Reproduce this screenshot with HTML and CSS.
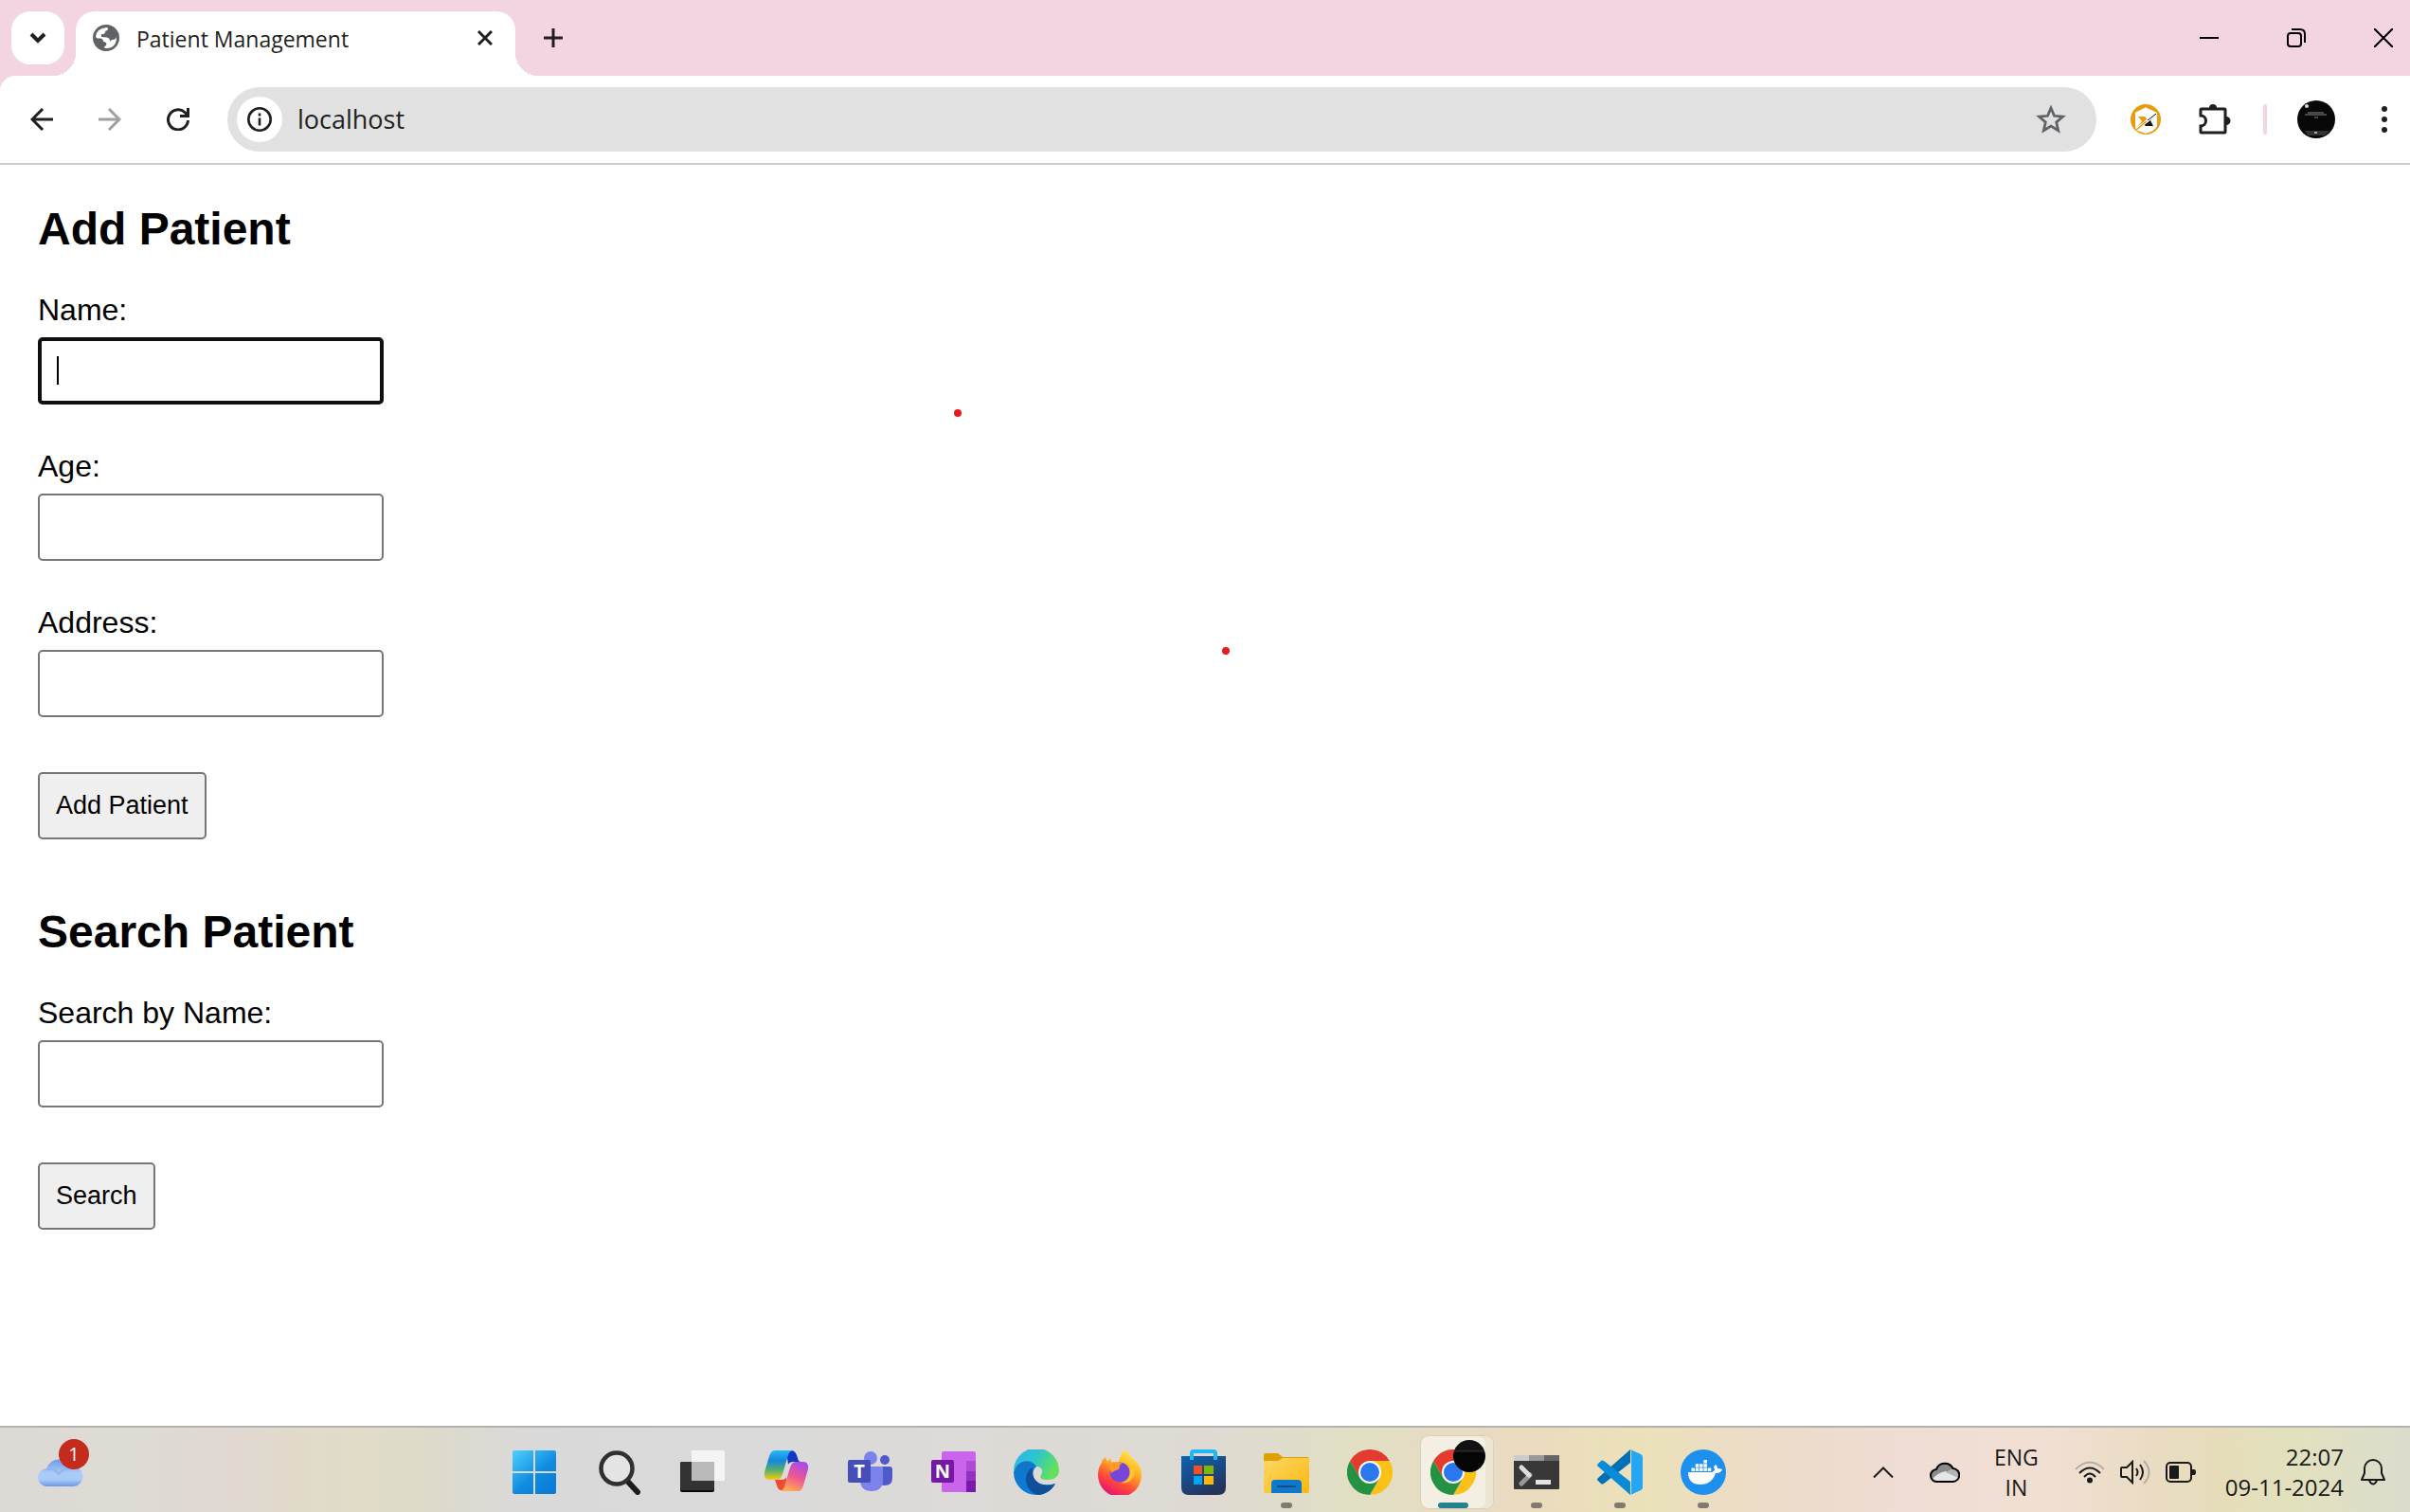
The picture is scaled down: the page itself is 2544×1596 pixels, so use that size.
FILE: index.html
```html
<!DOCTYPE html>
<html lang="en">
<head>
<meta charset="utf-8">
<title>Patient Management</title>
<link rel="stylesheet" href="styles.css">
</head>
<body>
<svg width="0" height="0" class="defs" aria-hidden="true">
  <defs>
    <symbol id="chrome" viewBox="0 0 48 48">
      <path d="M24 24L3.2 12A24 24 0 0 1 44.8 12Z" fill="#e33b2e"/>
      <path d="M44.800 12A24 24 0 0 1 24 48L34.400 30L24 12Z" fill="#fbc116"/>
      <path d="M24 48A24 24 0 0 1 3.200 12L13.600 30L34.400 30Z" fill="#259143"/>
      <path d="M3.200 12L13.600 30L24 24L24 12Z" fill="#e33b2e"/>
      <circle cx="24" cy="24" r="12" fill="#fff"/>
      <circle cx="24" cy="24" r="10" fill="#2b78ee"/>
    </symbol>
  </defs>
</svg>
<header class="browser">
  <div class="tabstrip">
    <button class="tab-search" aria-label="Search tabs"><svg width="18" height="14" viewBox="0 0 18 14"><path d="M2 3l7 7 7-7" fill="none" stroke="#1f1f1f" stroke-width="4"/></svg></button>
    <div class="tab">
      <svg width="28" height="28" viewBox="0 0 28 28"><circle cx="14" cy="14" r="14" fill="#5f6368"/><path d="M14.500 3Q16 3 16 4.500T14 6.500Q13 6.500 13 8T11 10H9v3q3 0 6 .5 3 1 3 3t2-.5h1q3 0 4-3Q25 25 14 25q-2 0-2-1 0-2 2-2.500 1-.5 0-2.500-2 0-3-1T9 15.500Q5 16 3 13 3.500 4 14.500 3z" fill="#fff"/><path d="M3 14.500h5q3 0 3 3.500 3 0 3 2.500T11.500 23v1.500Q4 23 3 14.500z" fill="#5f6368"/></svg>
      <span class="tab-title">Patient Management</span>
      <button class="plain" aria-label="Close tab"><svg width="16" height="16" viewBox="0 0 16 16"><path d="M1 1l14 14M15 1L1 15" stroke="#1f1f1f" stroke-width="3"/></svg></button>
    </div>
    <button class="plain new-tab" aria-label="New tab"><svg width="20" height="20" viewBox="0 0 20 20"><path d="M10 0v20M0 10h20" stroke="#1f1f1f" stroke-width="3"/></svg></button>
    <div class="window-controls">
      <button class="plain" aria-label="Minimize"><svg width="20" height="20" viewBox="0 0 20 20"><path d="M0 10h20" stroke="#000" stroke-width="2"/></svg></button>
      <button class="plain" aria-label="Restore"><svg width="20" height="20" viewBox="0 0 20 20" fill="none" stroke="#000" stroke-width="2"><rect x="1" y="5" width="14" height="14" rx="3"/><path d="M5 1h9q5 0 5 5v9"/></svg></button>
      <button class="plain" aria-label="Close"><svg width="20" height="20" viewBox="0 0 20 20"><path d="M0 0l20 20M20 0L0 20" stroke="#000" stroke-width="2"/></svg></button>
    </div>
  </div>
  <div class="toolbar">
    <div class="nav">
      <button class="plain" aria-label="Back"><svg width="24" height="24" viewBox="0 0 24 24" fill="none" stroke="#1f1f1f" stroke-width="3"><path d="M24 12H2M13 1L2 12l11 11"/></svg></button>
      <button class="plain" aria-label="Forward"><svg width="24" height="24" viewBox="0 0 24 24" fill="none" stroke="#a0a0a0" stroke-width="3"><path d="M0 12h22M11 1l11 11-11 11"/></svg></button>
      <button class="plain" aria-label="Reload"><svg width="24" height="24" viewBox="0 0 24 24" fill="none" stroke="#1f1f1f" stroke-width="3"><path d="M22.500 13A10.500 10.500 0 1 1 19 4.500l3 3M22.500 0v8.500H14"/></svg></button>
    </div>
    <div class="omnibox">
      <button class="site-info" aria-label="Site information"><svg width="26" height="26" viewBox="0 0 26 26"><circle cx="13" cy="13" r="11.700" fill="none" stroke="#1f1f1f" stroke-width="2.600"/><path d="M13 11.500v8M13 6.500v3" stroke="#1f1f1f" stroke-width="2.600"/></svg></button>
      <input class="address" type="text" value="localhost" aria-label="Address">
      <button class="plain" aria-label="Bookmark"><svg width="32" height="30" viewBox="0 0 32 30"><path d="M16 3l3.500 8.300 9 .8-6.800 5.900 2 8.800L16 22.100l-7.700 4.700 2-8.800L3.500 12.100l9-.8z" fill="none" stroke="#5f6368" stroke-width="2.800"/></svg></button>
    </div>
    <div class="extensions">
      <svg width="32" height="32" viewBox="0 0 32 32"><circle cx="16" cy="16" r="15" fill="#fff" stroke="#e89c0c" stroke-width="2"/><path d="M6 28A15.500 15.500 0 1 1 26 28Q28 26 28 24V9L16 3.500 5 9z" fill="#e89c0c"/><path d="M5 9l11-5.500L27 9v15l-4 4-7 3-8-3-3-4z" fill="#fff"/><path d="M8 13h7l3 3-7 7H8l4-5z" fill="#e89c0c"/><path d="M24 23h-8l-3-2 7-6 7-4-6 6z" fill="#111"/><path d="M6 27L27 10" stroke="#fff" stroke-width="3"/><path d="M6 27L17 18" stroke="#e89c0c" stroke-width="1.500"/><path d="M18 17L27 10" stroke="#111"/></svg>
      <svg class="puzzle" width="34" height="34" viewBox="0 0 34 34"><path d="M3 6h24q1 0 1 1v23q0 1-1 1H3q-1 0-1-1v-6a5.500 5.500 0 0 0 0-11V7q0-1 1-1z" fill="none" stroke="#1f1f1f" stroke-width="3"/><path d="M11 5a4 4 0 0 1 8 0zM29 14a4 4 0 0 1 0 9z" fill="#1f1f1f"/></svg>
      <span class="separator"></span>
      <svg width="40" height="40" viewBox="0 0 40 40"><circle cx="20" cy="20" r="20" fill="#080808"/><circle cx="10" cy="6" r="2" fill="#ddd"/><path d="M11 13h17M8 15h23M18 18h4" stroke="#888"/><path d="M8 32h26l-5 5H11z" fill="#333"/><path d="M18 34h3" stroke="#aaa" stroke-width="2"/></svg>
      <button class="plain" aria-label="Menu"><svg width="6" height="28" viewBox="0 0 6 28" fill="#1f1f1f"><circle cx="3" cy="3" r="3"/><circle cx="3" cy="14" r="3"/><circle cx="3" cy="25" r="3"/></svg></button>
    </div>
  </div>
</header>

<main class="page">
  <h2>Add Patient</h2>
  <form>
    <label for="name">Name:</label>
    <span class="focus-field"><input class="field" type="text" id="name"><span class="caret"></span></span>
    <label for="age">Age:</label>
    <input class="field" type="text" id="age">
    <label for="address">Address:</label>
    <input class="field" type="text" id="address">
    <button class="submit" type="button">Add Patient</button>
  </form>
  <h2>Search Patient</h2>
  <form>
    <label for="search">Search by Name:</label>
    <input class="field" type="text" id="search">
    <button class="submit" type="button">Search</button>
  </form>
  <span class="dot dot-a"></span>
  <span class="dot dot-b"></span>
</main>

<footer class="taskbar">
  <button class="plain weather" aria-label="Weather">
    <svg width="48" height="31" viewBox="0 0 48 31"><defs><linearGradient id="cl" x2="0" y2="1"><stop offset="0" stop-color="#7098e6"/><stop offset=".5" stop-color="#a9cbf8"/><stop offset=".75" stop-color="#a9cbf8"/><stop offset="1" stop-color="#6d94e6"/></linearGradient></defs><path d="M10 31a9.500 9.500 0 0 1-1-19A15 15 0 0 1 36 10a10.500 10.500 0 0 1 2 21z" fill="url(#cl)"/><path d="M9 13q9-1 13 5 5-7 14-6" fill="none" stroke="#8fb4f1" stroke-width="2"/></svg>
    <span class="badge">1</span>
  </button>
  <nav class="apps">
    <button class="app" aria-label="Start"><svg width="48" height="48" viewBox="0 0 48 48"><defs><linearGradient id="w" gradientUnits="userSpaceOnUse" x1="0" y1="0" x2="40" y2="48"><stop offset="0" stop-color="#4fd4ff"/><stop offset=".6" stop-color="#0f8be0"/><stop offset="1" stop-color="#0a7bd6"/></linearGradient></defs><path d="M3 1h20v22H1V3q0-2 2-2zM25 1h20q2 0 2 2v20H25zM1 25h22v22H3q-2 0-2-2zM25 25h22v20q0 2-2 2H25z" fill="url(#w)"/></svg></button>
    <button class="app" aria-label="Search"><svg width="48" height="48" viewBox="0 0 48 48"><path d="M32 33l11 12" stroke="#1c1c1c" stroke-width="6" stroke-linecap="round"/><circle cx="21" cy="20" r="16.500" fill="#e4e4e4" stroke="#303030" stroke-width="4.500"/></svg></button>
    <button class="app" aria-label="Task view"><svg width="48" height="48" viewBox="0 0 48 48"><rect y="13" width="36" height="32" rx="2" fill="#0a0a0a"/><rect y="13" width="36" height="30" rx="2" fill="#333"/><rect x="12" y="1" width="35" height="32" rx="1" fill="#f4f4f4"/><path d="M12 13h24v20H12z" fill="#b9b9b9"/></svg></button>
    <button class="app" aria-label="Copilot"><svg width="48" height="48" viewBox="0 0 48 48"><defs><linearGradient id="ca" x2="0" y2="1"><stop offset="0" stop-color="#27b8f5"/><stop offset=".35" stop-color="#1687dc"/><stop offset=".65" stop-color="#4fae70"/><stop offset="1" stop-color="#f8cb10"/></linearGradient><linearGradient id="cb" x1=".7" x2=".3" y2="1"><stop offset="0" stop-color="#a64be8"/><stop offset=".5" stop-color="#ef5790"/><stop offset="1" stop-color="#ffb050"/></linearGradient></defs><path d="M24 1h5q4 0 6 5l2 6 2 1h-8q-4 0-5 3z" fill="#1137c4"/><path d="M24 43h-5q-4 0-5-5l-2-6h7q4 0 5-3z" fill="#ee4c34"/><path d="M12 1h19q-4 1-5 5l-6 20q-2 6-6 6H6q-6 0-5-8L6 7q2-6 6-6z" fill="url(#ca)"/><path d="M37 44H17q4-1 5-5l6-20q2-6 6-6h8q6 0 5 8l-5 17q-2 6-5 6z" fill="url(#cb)"/></svg></button>
    <button class="app" aria-label="Teams"><svg width="48" height="48" viewBox="0 0 48 48"><circle cx="40" cy="11" r="5" fill="#5059c9"/><circle cx="25" cy="9" r="7" fill="#7b83eb"/><path d="M35 18h10q3 0 3 3v9q0 8-8 8-5 0-7-4z" fill="#5059c9"/><path d="M14 18h24v14q0 12-12 12T14 32z" fill="#7b83eb"/><rect x="1" y="11" width="24" height="24" rx="2" fill="#464eb8"/></svg><span class="glyph">T</span></button>
    <button class="app" aria-label="OneNote"><svg width="48" height="48" viewBox="0 0 48 48"><rect x="12" y="2" width="36" height="43" rx="2" fill="#ca64ea"/><path d="M38 12h10v11H38z" fill="#ae4bd5"/><path d="M38 23h10v10H38z" fill="#9332bf"/><path d="M38 33h10v12H38z" fill="#7719aa"/><rect x="1" y="11" width="24" height="24" rx="2" fill="#7418a5"/></svg><span class="glyph">N</span></button>
    <button class="app" aria-label="Edge"><svg width="48" height="48" viewBox="0 0 48 48"><defs><linearGradient id="ea" x2="1" y2=".4"><stop offset="0" stop-color="#32b1f1"/><stop offset=".5" stop-color="#2cc4cf"/><stop offset="1" stop-color="#62e05e"/></linearGradient><linearGradient id="eb" x2=".6" y2="1"><stop offset="0" stop-color="#1173c4"/><stop offset="1" stop-color="#0a7fdd"/></linearGradient></defs><path d="M0 24C4 8 22 8 26 17c-8 3-8 18 4 20 6 1 10 0 14-1A24 24 0 0 1 24 48 24 24 0 0 1 0 24z" fill="url(#eb)"/><path d="M0 23A24 24 0 0 1 48 22c0 7-6 10-12 10-7 0-9-2-7-5 3-5 0-9-5-9C20 10 5 9 0 23z" fill="url(#ea)"/><path d="M20 19c-12 6-8 27 7 29 8-1 14-6 17-12-10 4-26 1-24-17z" fill="#10509a"/></svg></button>
    <button class="app" aria-label="Firefox"><svg width="48" height="48" viewBox="0 0 48 48"><defs><linearGradient id="fa" x1=".8" x2=".3" y2="1"><stop offset="0" stop-color="#fff04a"/><stop offset=".4" stop-color="#ffae20"/><stop offset=".7" stop-color="#ff4b38"/><stop offset="1" stop-color="#e40c78"/></linearGradient></defs><path d="M5 14q0-3 4-6l2 5 3-4 1 4 8 1q1-9 7-14 3 6 9 11 8 6 8 16A23 23 0 0 1 1 27Q1 19 5 14z" fill="url(#fa)"/><circle cx="24" cy="24" r="10.500" fill="#7545dc"/><path d="M17 14q5-2 10 1-4 1-3 3l-1 3q-5 1-8 4l-2-7z" fill="#ff9825"/><path d="M38 17q4 9-2 15-4 4-10 3 10-3 9-13z" fill="#ffc03a"/></svg></button>
    <button class="app" aria-label="Store"><svg width="48" height="48" viewBox="0 0 48 48"><defs><linearGradient id="st" x2=".5" y2="1"><stop offset="0" stop-color="#0d63b4"/><stop offset="1" stop-color="#24355d"/></linearGradient></defs><path d="M1 7h47v33q0 8-8 8H9q-8 0-8-8z" fill="url(#st)"/><path d="M12 11V4q0-2 2-2h21q2 0 2 2v7" fill="none" stroke="#21b7f5" stroke-width="4"/><path d="M14 17h9v9h-9z" fill="#f25022"/><path d="M25 17h10v9H25z" fill="#7fba00"/><path d="M14 28h9v9h-9z" fill="#00a4ef"/><path d="M25 28h10v9H25z" fill="#ffb900"/></svg></button>
    <button class="app running" aria-label="File Explorer"><svg width="48" height="48" viewBox="0 0 48 48"><defs><linearGradient id="fe" x2="1" y2="1"><stop offset="0" stop-color="#ffd766"/><stop offset="1" stop-color="#f8b90e"/></linearGradient></defs><path d="M0 6q0-2 2-2h13l5 4h26q2 0 2 2v4H0z" fill="#dfa000"/><path d="M0 12h15l5-3h28v35q0 2-2 2H2q-2 0-2-2z" fill="url(#fe)"/><path d="M8 46V36q0-4 4-4h24q4 0 4 4v10z" fill="#0f78ca"/><path d="M15 39h18" stroke="#0a4e91" stroke-width="2" stroke-linecap="round"/></svg></button>
    <button class="app" aria-label="Chrome"><svg width="48" height="48"><use href="#chrome"/></svg></button>
    <button class="app running active" aria-label="Chrome, Patient Management"><svg width="48" height="48"><use href="#chrome"/></svg><span class="profile"></span></button>
    <button class="app running" aria-label="Terminal"><svg width="48" height="48" viewBox="0 0 48 48"><rect y="6" width="48" height="36" rx="1" fill="#383838"/><path d="M0 6h16v6H0z" fill="#ccc"/><path d="M16 6h16v6H16z" fill="#999"/><path d="M32 6h16v6H32z" fill="#666"/><path d="M17 27l-9 9" stroke="#999" stroke-width="5" stroke-linecap="round"/><path d="M8 19l8 8" stroke="#ddd" stroke-width="5" stroke-linecap="round"/><path d="M23 32h16v5H23z" fill="#e4e4e4"/></svg></button>
    <button class="app running" aria-label="Visual Studio Code"><svg width="48" height="48" viewBox="0 0 48 48"><path d="M35 0v14L7 36q-2 1-3 0l-3-3q-2-1 0-3z" fill="#0070b8"/><path d="M35 48V34L7 12q-2-1-3 0l-3 3q-2 1 0 3z" fill="#0a8bd8"/><path d="M35 0l11 5q2 1 2 3v32q0 2-2 3l-11 5q1-1 1-3V3q0-2-1-3z" fill="#27a5f2"/></svg></button>
    <button class="app running" aria-label="Docker"><svg width="48" height="48" viewBox="0 0 48 48"><circle cx="24" cy="24" r="24" fill="#1d90ed"/><path d="M8 24h25q3-1 3-3-2-3 1-5 2 1 2 4 3 0 5 1-1 4-7 4-4 12-16 12Q8 37 8 24z" fill="#fff"/><path d="M11.500 19.500h3.500V23h-3.500zM15.800 19.500h3.500V23h-3.500zM20.100 19.500h3.500V23h-3.500zM24.400 19.500h3.500V23h-3.500zM28.700 19.500h3.500V23h-3.500zM15.800 15.200h3.500v3.500h-3.500zM20.100 15.200h3.500v3.500h-3.500zM24.400 15.200h3.500v3.500h-3.500zM24.400 11h3.500v3.500h-3.500z" fill="#fff"/></svg></button>
  </nav>
  <div class="tray">
    <button class="plain" aria-label="Show hidden icons"><svg width="22" height="12" viewBox="0 0 22 12"><path d="M1 11.500L11 1.500l10 10" fill="none" stroke="#1a1a1a" stroke-width="2"/></svg></button>
    <svg class="cloud" width="32" height="22" viewBox="0 0 32 22"><path d="M8 21a6.500 6.500 0 0 1-1-13A9.500 9.500 0 0 1 24.500 7 7 7 0 0 1 24 21z" fill="#8b8b8b"/><path d="M3 18q6-7 14-8l13 6q-1 4-6 5H8z" fill="#e6e6e6"/><path d="M17 11l7-4q6 1 7 6l-1 4z" fill="#b5b5b5"/><path d="M8 21a6.500 6.500 0 0 1-1-13A9.500 9.500 0 0 1 24.500 7 7 7 0 0 1 24 21z" fill="none" stroke="#000" stroke-width="2"/></svg>
    <div class="language">ENG<br>IN</div>
    <div class="status">
      <svg width="32" height="24" viewBox="0 0 32 24" fill="none" stroke-width="2"><path d="M1 9Q16-6 31 9" stroke="#b9ada2"/><path d="M5 13q11-11 22 0M10 17q6-7 12 0" stroke="#1a1a1a"/><circle cx="16" cy="20.500" r="3" fill="#1a1a1a"/></svg>
      <svg width="32" height="26" viewBox="0 0 32 26" fill="none" stroke="#1a1a1a" stroke-width="2"><path d="M2 8h5l6-6v22l-6-6H2q-1 0-1-1V9q0-1 1-1zM17 9q3 4 0 8M21 5q6 8 0 16"/><path d="M25 1q11 12 0 24" stroke="#b9ada2"/></svg>
      <svg width="32" height="24" viewBox="0 0 32 24"><rect x="1" y="2" width="26" height="20" rx="4" fill="none" stroke="#1a1a1a" stroke-width="2"/><rect x="4" y="5" width="10" height="14" rx="1" fill="#1a1a1a"/><path d="M28 9h2q2 0 2 3t-2 3h-2z" fill="#1a1a1a"/></svg>
    </div>
    <div class="clock">22:07<br>09-11-2024</div>
    <button class="plain" aria-label="Notifications"><svg width="26" height="28" viewBox="0 0 26 28" fill="none" stroke="#1a1a1a" stroke-width="2"><path d="M1 22l3-7v-5a9 9 0 0 1 18 0v5l3 7zM9 23q4 7 8 0" stroke-linejoin="round"/></svg></button>
  </div>
</footer>
</body>
</html>
```
FILE: styles.css
```css
* { box-sizing: border-box; }
body {
  margin: 0;
  min-height: 100vh;
  display: flex;
  flex-direction: column;
  background: #fff;
  color: #000;
  font-family: "Liberation Sans", Arial, sans-serif;
}
svg { display: block; flex: none; }
.defs { position: absolute; }
button, input { font-family: inherit; }
.plain { border: 0; padding: 0; background: none; }

/* Tab strip */
.browser { background: #f2d4e3; }
.tabstrip {
  display: flex;
  align-items: center;
  height: 80px;
  padding: 0 18px 0 12px;
}
.tab-search {
  display: flex;
  align-items: center;
  justify-content: center;
  width: 56px;
  height: 56px;
  border: 0;
  border-radius: 20px;
  background: #fff;
}
.tab {
  position: relative;
  align-self: flex-end;
  display: flex;
  align-items: center;
  width: 464px;
  height: 68px;
  margin-left: 12px;
  padding: 0 24px 12px 18px;
  border-radius: 20px 20px 0 0;
  background: #fff;
}
.tab::before, .tab::after {
  content: "";
  position: absolute;
  bottom: 0;
  width: 24px;
  height: 24px;
}
.tab::before { right: 100%; background: radial-gradient(circle at 0 0, transparent 24px, #fff 24px); }
.tab::after { left: 100%; background: radial-gradient(circle at 100% 0, transparent 24px, #fff 24px); }
.tab-title {
  flex: 1;
  margin: 2px 0 0 18px;
  color: #1f1f1f;
  font: 23px/32px "Open Sans", sans-serif;
}
.new-tab { margin-left: 30px; }
.window-controls { display: flex; gap: 72px; margin-left: auto; }

/* Toolbar */
.toolbar {
  display: flex;
  align-items: center;
  height: 94px;
  padding: 0 24px 0 32px;
  border-bottom: 2px solid #ccc;
  border-top-left-radius: 16px;
  background: #fff;
}
.nav { display: flex; gap: 48px; }
.omnibox {
  flex: 1;
  display: flex;
  align-items: center;
  height: 68px;
  margin-left: 40px;
  padding: 0 32px 0 10px;
  border-radius: 34px;
  background: #e1e1e1;
}
.site-info {
  display: flex;
  align-items: center;
  justify-content: center;
  width: 48px;
  height: 48px;
  padding: 0;
  border: 0;
  border-radius: 50%;
  background: #fff;
}
.address {
  flex: 1;
  margin-left: 16px;
  padding: 0;
  border: 0;
  outline: 0;
  background: none;
  color: #1f1f1f;
  font: 27px/40px "Open Sans", sans-serif;
}
.extensions { display: flex; align-items: center; margin-left: 36px; gap: 32px; }
.puzzle { margin: 0 2px 0 8px; }
.separator { width: 4px; height: 32px; border-radius: 2px; background: #f2d4e3; }
.extensions .plain { margin-left: 17px; }

/* Page */
.page { position: relative; flex: 1; padding: 40px; }
h2 { margin: 0 0 40px; font-size: 48px; line-height: 55px; }
form { display: flex; flex-direction: column; align-items: flex-start; }
form + h2 { margin-top: 70px; }
label { margin-bottom: 10px; font-size: 32px; line-height: 37px; }
.field {
  display: block;
  width: 365px;
  height: 71px;
  margin-bottom: 47px;
  padding: 20px;
  border: 2px solid #767676;
  border-radius: 5px;
  background: #fff;
  font-size: 27px;
}
.focus-field { position: relative; }
.focus-field .field { border: 4px solid #101010; }
.caret { position: absolute; left: 20px; top: 20px; width: 2px; height: 30px; background: #000; }
.submit {
  height: 71px;
  margin-top: 11px;
  padding: 0 17px;
  border: 2px solid #767676;
  border-radius: 5px;
  background: #efefef;
  color: #000;
  font-size: 27px;
}
.dot { position: absolute; width: 8px; height: 8px; border-radius: 50%; background: #e81a1c; }
.dot-a { left: 1007px; top: 258px; }
.dot-b { left: 1290px; top: 509px; }

/* Taskbar */
.taskbar {
  display: grid;
  grid-template-columns: 520px auto 1fr;
  align-items: center;
  height: 91px;
  padding-top: 4px;
  border-top: 2px solid #b5b1ac;
  background: linear-gradient(90deg, #dddad5 0%, #dedad4 6%, #e0d8d3 9%, #e1dacb 12%, #e0dcc8 15%, #dddacb 18%, #dad9d9 22%, #dadada 32%, #dddad7 40%, #dedad3 50%, #e0dfc4 56%, #e9dac1 62%, #ebe1b9 68%, #ecdcc8 73%, #efdcd4 79%, #f1dfd3 85%, #eadcc4 89%, #e6dcba 92%, #e2e1bd 95%, #dcdcce 100%);
}
.weather { position: relative; justify-self: start; margin-left: 40px; }
.badge {
  position: absolute;
  left: 22px;
  top: -19px;
  width: 32px;
  height: 32px;
  border-radius: 50%;
  background: #c42b1c;
  color: #fff;
  font: 20px/32px "Open Sans", sans-serif;
  text-align: center;
}
.apps { display: flex; }
.app {
  position: relative;
  display: flex;
  align-items: center;
  justify-content: center;
  width: 88px;
  height: 76px;
  padding: 0;
  border: 0;
  background: none;
}
.app:first-child { margin-right: 2px; }
.app svg { position: relative; }
.glyph {
  position: absolute;
  left: 21px;
  top: 25px;
  width: 24px;
  color: #fff;
  font: bold 20px/24px "Open Sans", sans-serif;
  text-align: center;
}
.running::after {
  content: "";
  position: absolute;
  bottom: 0;
  left: 38px;
  width: 12px;
  height: 6px;
  border-radius: 3px;
  background: #807b6e;
}
.active::before {
  content: "";
  position: absolute;
  left: 10px;
  top: 0;
  width: 76px;
  height: 76px;
  border-radius: 8px;
  background: #f3efe3;
  box-shadow: inset -8px 0 #ebe5d2, 0 0 0 1px #d9d0b8;
}
.active::after { left: 28px; width: 32px; background: #25808f; }
.profile {
  position: absolute;
  left: 44px;
  top: 4px;
  width: 34px;
  height: 34px;
  border-radius: 50%;
  background: linear-gradient(#111 30%, #2a2a2a 34%, #050505 40%);
}
.tray {
  justify-self: end;
  display: flex;
  align-items: center;
  padding-right: 26px;
  color: #1a1a1a;
  font: 23px/32px "Open Sans", sans-serif;
}
.cloud { margin-left: 38px; }
.language { margin-left: 36px; text-align: center; }
.status { display: flex; align-items: center; gap: 16px; margin-left: 38px; }
.clock { margin-left: 31px; font-size: 24px; text-align: right; }
.tray .clock + .plain { margin-left: 18px; }
```
